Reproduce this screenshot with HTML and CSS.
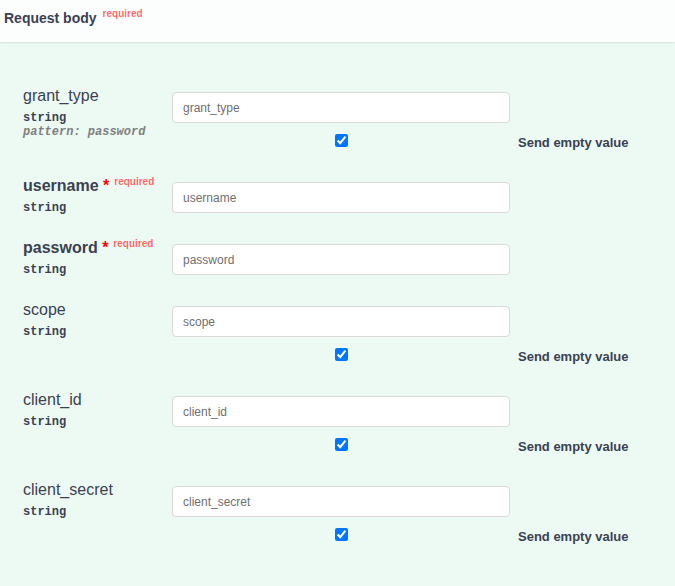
FILE: index.html
```html
<!DOCTYPE html>
<html>
<head>
<meta charset="utf-8">
<link rel="stylesheet" href="styles.css">
</head>
<body>
<div class="section">
  <div class="section-header">
    <h4 class="title">Request body<span class="title-req">required</span></h4>
  </div>
  <div class="params">
    <div class="row">
      <div class="name-col">
        <div class="pname">grant_type</div>
        <div class="ptype">string</div>
        <div class="pext">pattern: password</div>
      </div>
      <div class="input-col"><input type="text" class="field" placeholder="grant_type"></div>
      <div class="check-col"><input type="checkbox" class="check" checked></div>
      <div class="label-col">Send empty value</div>
    </div>
    <div class="row">
      <div class="name-col">
        <div class="pname required">username<span class="star">&nbsp;*</span><span class="req">required</span></div>
        <div class="ptype">string</div>
      </div>
      <div class="input-col"><input type="text" class="field" placeholder="username"></div>
    </div>
    <div class="row">
      <div class="name-col">
        <div class="pname required">password<span class="star">&nbsp;*</span><span class="req">required</span></div>
        <div class="ptype">string</div>
      </div>
      <div class="input-col"><input type="text" class="field" placeholder="password"></div>
    </div>
    <div class="row">
      <div class="name-col">
        <div class="pname">scope</div>
        <div class="ptype">string</div>
      </div>
      <div class="input-col"><input type="text" class="field" placeholder="scope"></div>
      <div class="check-col"><input type="checkbox" class="check" checked></div>
      <div class="label-col">Send empty value</div>
    </div>
    <div class="row">
      <div class="name-col">
        <div class="pname">client_id</div>
        <div class="ptype">string</div>
      </div>
      <div class="input-col"><input type="text" class="field" placeholder="client_id"></div>
      <div class="check-col"><input type="checkbox" class="check" checked></div>
      <div class="label-col">Send empty value</div>
    </div>
    <div class="row">
      <div class="name-col">
        <div class="pname">client_secret</div>
        <div class="ptype">string</div>
      </div>
      <div class="input-col"><input type="text" class="field" placeholder="client_secret"></div>
      <div class="check-col"><input type="checkbox" class="check" checked></div>
      <div class="label-col">Send empty value</div>
    </div>
  </div>
</div>
</body>
</html>
```

FILE: styles.css
```css
html, body {
  margin: 0;
  padding: 0;
  background: #edfaf4;
  font-family: "Liberation Sans", Arial, Helvetica, sans-serif;
  color: #3b4151;
}

.section {
  min-height: 586px;
  background: #edfaf4;
}

.section-header {
  height: 42px;
  box-sizing: border-box;
  padding: 10px 4px 0;
  background: rgba(255, 255, 255, 0.8);
  box-shadow: 0 1px 2px rgba(0, 0, 0, 0.1);
}

.title {
  margin: 0;
  font-size: 14px;
  font-weight: 700;
  color: #3b4151;
}

.title-req {
  position: relative;
  top: -6px;
  padding-left: 6px;
  font-size: 10px;
  font-weight: 700;
  color: rgba(255, 0, 0, 0.6);
}

.params {
  padding: 35px 0 0 23px;
}

.row {
  display: grid;
  grid-template-columns: 149px 338px auto;
  grid-template-rows: 41px auto;
  padding: 10px 0 11px;
}

.name-col {
  grid-column: 1;
  grid-row: 1 / span 2;
}

.pname {
  font-size: 16px;
  font-weight: 400;
  color: #3b4151;
}

.pname.required {
  font-weight: 700;
}

.star {
  color: red;
}

.req {
  position: relative;
  top: -6px;
  padding: 5px;
  font-size: 10px;
  font-weight: 700;
  color: rgba(255, 0, 0, 0.6);
}

.ptype {
  padding-top: 6px;
  font-family: "Liberation Mono", "Courier New", monospace;
  font-size: 12px;
  font-weight: 700;
  color: #3b4151;
}

.pext {
  font-family: "Liberation Mono", "Courier New", monospace;
  font-size: 12px;
  font-weight: 700;
  font-style: italic;
  color: gray;
}

.input-col {
  grid-column: 2;
  grid-row: 1;
  padding-top: 5px;
}

.field {
  display: block;
  box-sizing: border-box;
  width: 338px;
  height: 31px;
  margin: 0;
  padding: 0 10px;
  border: 1px solid #d9d9d9;
  border-radius: 4px;
  background: #fff;
  font-family: "Liberation Sans", Arial, sans-serif;
  font-size: 12px;
  color: #3b4151;
  outline: none;
}

.field::placeholder {
  color: #6f6f6f;
}

.check-col {
  grid-column: 2;
  grid-row: 2;
  height: 28px;
  display: flex;
  justify-content: center;
  align-items: flex-start;
}

.check {
  width: 13px;
  height: 13px;
  margin: 6px 0 0;
  accent-color: #0075ff;
}

.label-col {
  grid-column: 3;
  grid-row: 2;
  margin-left: 8px;
  padding-top: 7px;
  line-height: 15px;
  font-size: 13px;
  font-weight: 700;
  color: #3b4151;
  white-space: nowrap;
}
```
